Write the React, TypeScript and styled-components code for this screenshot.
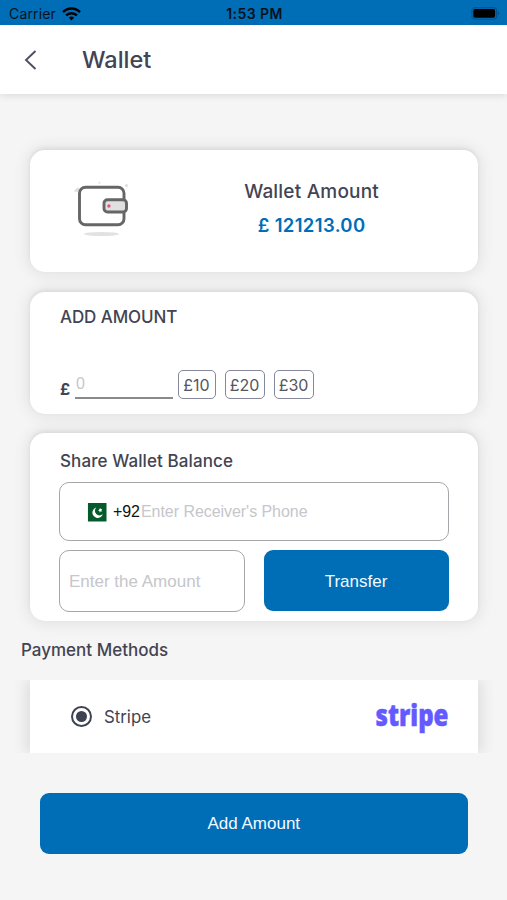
import React from "react";
import styled, { createGlobalStyle } from "styled-components";

const BLUE = "#006db7";
const INK = "#424453";

const GlobalStyle = createGlobalStyle`
  * { box-sizing: border-box; }
  body { margin: 0; background: #f5f5f5; }
  button, input { font: inherit; margin: 0; }
`;

const Screen = styled.div`
  width: 507px;
  height: 900px;
  overflow: hidden;
  background: #f5f5f5;
  color: ${INK};
  font-family: Inter, "Liberation Sans", sans-serif;
  display: flex;
  flex-direction: column;
`;

const StatusBar = styled.div`
  flex: none;
  height: 25px;
  padding: 2px 7px 0 9px;
  background: ${BLUE};
  color: #06121c;
  display: grid;
  grid-template-columns: 1fr auto 1fr;
  align-items: center;
  font-size: 14px;
  line-height: 20px;
`;

const Carrier = styled.div`
  display: flex;
  align-items: center;
  gap: 6px;
  letter-spacing: 0.15px;
`;

const Clock = styled.div`
  font-weight: 600;
  letter-spacing: 0.45px;
`;

const BatterySlot = styled.div`
  display: flex;
  justify-content: flex-end;
`;

const Header = styled.header`
  flex: none;
  height: 69px;
  background: #fff;
  display: flex;
  align-items: center;
  padding-left: 24px;
  box-shadow: 0 2px 7px rgba(0, 0, 0, 0.1);
`;

const BackButton = styled.button`
  width: 58px;
  height: 40px;
  padding: 0;
  border: 0;
  background: none;
  display: flex;
  align-items: center;
`;

const Title = styled.h1`
  margin: 0;
  font-size: 23.5px;
  font-weight: 500;
  line-height: 30px;
`;

const Content = styled.main`
  padding: 56px 29.5px 0 30px;
  display: flex;
  flex-direction: column;
`;

const Card = styled.section<{ $height: number }>`
  height: ${(p) => p.$height}px;
  margin-bottom: 19.5px;
  padding: 0 29px;
  border-radius: 15px;
  background: #fff;
  box-shadow: 0 -2px 4px rgba(0, 0, 0, 0.06), 0 0 16px 2px rgba(0, 0, 0, 0.09);
`;

const BalanceCard = styled(Card)`
  display: flex;
  align-items: flex-start;
  justify-content: space-between;
  padding: 30px 98.5px 0 44px;
`;

const Balance = styled.div`
  text-align: center;
`;

const BalanceLabel = styled.div`
  font-size: 19px;
  line-height: 24px;
  font-weight: 500;
  letter-spacing: 0.2px;
`;

const BalanceValue = styled.div`
  margin-top: 9px;
  font-size: 18.5px;
  line-height: 24px;
  font-weight: 600;
  letter-spacing: 0.35px;
  color: ${BLUE};
`;

const Heading = styled.h2<{ $spacing?: number }>`
  margin: 0;
  font-size: 17px;
  line-height: 22px;
  font-weight: 500;
  letter-spacing: ${(p) => p.$spacing ?? 0}px;
`;

const AmountCard = styled(Card)`
  padding-top: 14px;
  padding-left: 30px;
`;

const AmountRow = styled.div`
  margin-top: 42.5px;
  display: flex;
  height: 29px;
`;

const Pound = styled.span`
  width: 15px;
  padding-top: 8px;
  font-size: 16px;
  line-height: 22px;
  font-weight: 700;
`;

const AmountInput = styled.input`
  width: 98px;
  height: 29px;
  padding: 1px 0 0 1px;
  margin-right: 4.5px;
  border: 0;
  border-bottom: 2px solid #8a8a8a;
  border-radius: 0;
  outline: 0;
  background: none;
  font-family: "Liberation Sans", sans-serif;
  font-size: 16px;
  &::placeholder { color: #c7c7ca; opacity: 1; }
`;

const Chip = styled.button<{ $width: number }>`
  width: ${(p) => p.$width}px;
  height: 29px;
  margin-right: 9px;
  padding: 0;
  border: 1.4px solid #85879a;
  border-radius: 5px;
  background: #fff;
  color: #555660;
  font-size: 16px;
`;

const ShareCard = styled(Card)`
  padding-top: 16.5px;
  margin-bottom: 0;
`;

const ShareTitle = styled(Heading)`
  margin-left: 1px;
`;

const fieldBase = `
  border: 1.3px solid #a5a6aa;
  border-radius: 10px;
  background: #fff;
`;

const PhoneField = styled.div`
  ${fieldBase}
  margin-top: 10.5px;
  height: 59px;
  padding: 1px 0 0 27px;
  display: flex;
  align-items: center;
`;

const DialCode = styled.span`
  margin-left: 6px;
  width: 28px;
  color: #111;
  font-family: "Liberation Sans", sans-serif;
  font-size: 16px;
  letter-spacing: -0.1px;
`;

const PhoneInput = styled.input`
  width: 250px;
  height: 40px;
  padding: 0;
  border: 0;
  outline: 0;
  background: none;
  font-family: "Liberation Sans", sans-serif;
  font-size: 16px;
  letter-spacing: -0.05px;
  &::placeholder { color: #c6c6cb; opacity: 1; }
`;

const TransferRow = styled.div`
  margin-top: 9px;
  display: grid;
  grid-template-columns: 186px 185px;
  justify-content: space-between;
`;

const TransferInput = styled.input`
  ${fieldBase}
  width: 100%;
  height: 62px;
  padding: 2px 9px 0;
  outline: 0;
  font-family: "Liberation Sans", sans-serif;
  font-size: 17px;
  &::placeholder { color: #c6c6cb; opacity: 1; }
`;

const PrimaryButton = styled.button`
  height: 61px;
  padding: 2px 0 0;
  border: 0;
  border-radius: 9px;
  background: ${BLUE};
  color: #f4faff;
  font-family: "Liberation Sans", sans-serif;
  font-size: 17px;
`;

const SubmitButton = styled(PrimaryButton)`
  margin: 39.5px 10px 0;
`;

const MethodsTitle = styled(Heading)`
  margin: 18px 0 0 -9px;
`;

const MethodCard = styled.label`
  height: 73px;
  margin-top: 19px;
  padding: 0 28px 0 41px;
  background: #fff;
  display: flex;
  align-items: center;
  box-shadow: 0 0 16px 2px rgba(0, 0, 0, 0.12);
  clip-path: inset(0 -16px);
`;

const MethodName = styled.span`
  flex: 1;
  margin-left: 12px;
  font-size: 16.8px;
  line-height: 22px;
`;

const Radio = styled.span`
  width: 21px;
  height: 21px;
  border: 2px solid #3e4353;
  border-radius: 50%;
  display: grid;
  place-items: center;
  &::after {
    content: "";
    width: 11px;
    height: 11px;
    border-radius: 50%;
    background: #3e4353;
  }
`;

const WifiIcon = () => (
  <svg width="19" height="14" viewBox="0 0 19 14" fill="none" stroke="#000" strokeWidth="2.5">
    <path d="M1 5.2C5.8.3 13.2.3 18 5.2" />
    <path d="M4.1 8.4c3-3 7.8-3 10.8 0" />
    <path d="M9.5 13.4 6.8 10.6c1.5-1.5 3.9-1.5 5.4 0z" fill="#000" stroke="none" />
  </svg>
);

const BatteryIcon = () => (
  <svg width="29" height="13" viewBox="0 0 29 13">
    <rect x="0.8" y="0.6" width="24.8" height="11.6" rx="3.2" fill="none" stroke="#00528a" strokeWidth="1.1" />
    <rect x="2.3" y="2.1" width="21.8" height="8.6" rx="1.6" fill="#000" />
    <path d="M26.8 4.3v4.2c1.6-.6 1.6-3.6 0-4.2z" fill="#00528a" />
  </svg>
);

const BackIcon = () => (
  <svg width="13" height="20" viewBox="0 0 13 20" fill="none" stroke="#4c4e63" strokeWidth="1.9">
    <path d="M11.5 1 2 10l9.5 9" />
  </svg>
);

const WalletIcon = () => (
  <svg width="56" height="58" viewBox="0 0 56 58">
    <path d="M0 11.5c.6-2 2-1.6 2.8-3.2C4.600 7 6.500 8.500 6.500 12z" fill="#dcdcdc" />
    <circle cx="25.500" cy="2.800" r="1" fill="#dedede" />
    <circle cx="52.500" cy="5.500" r="1.500" fill="#dedede" />
    <rect x="5.500" y="7.200" width="44.500" height="37.500" rx="6" fill="#fff" stroke="#666" strokeWidth="2.900" />
    <rect x="30" y="19.800" width="22.500" height="12.200" rx="3.500" fill="#e0e0e0" stroke="#666" strokeWidth="2.900" />
    <circle cx="34.900" cy="26" r="1.700" fill="#e0557f" />
    <ellipse cx="27.500" cy="54" rx="17.500" ry="2" fill="#e2e2e2" />
  </svg>
);

const FlagIcon = () => (
  <svg width="20" height="19" viewBox="0 0 20 19">
    <rect width="1" height="19" fill="#f4f4f4" />
    <rect x="1" width="18.5" height="18.5" fill="#055a2d" />
    <path d="M9.3 4.5a5.3 5.3 0 1 0 6.5 6.6 4.6 4.6 0 1 1-6.5-6.6z" fill="#fff" />
    <path d="m13 4.7.7 1.3 1.5-.1-.8 1.3.8 1.3-1.5-.2-.9 1.1-.4-1.5-1.3-.6 1.3-.7z" fill="#fff" />
  </svg>
);

const StripeLogo = () => (
  <svg width="76" height="60" viewBox="0 0 76 60" role="img" aria-label="stripe">
    <text
      x="1.5"
      y="38.500"
      textLength="73"
      lengthAdjust="spacingAndGlyphs"
      fontFamily="'Open Sans', 'Noto Sans', sans-serif"
      fontWeight="800"
      fontSize="30"
      fill="#635bff"
      stroke="#635bff"
      strokeWidth="0.5"
    >
      stripe
    </text>
  </svg>
);

const presets = [
  { label: "£10", width: 38 },
  { label: "£20", width: 40 },
  { label: "£30", width: 40 },
];

export default function App() {
  return (
    <>
      <GlobalStyle />
      <Screen>
        <StatusBar>
          <Carrier>
            Carrier
            <WifiIcon />
          </Carrier>
          <Clock>1:53 PM</Clock>
          <BatterySlot>
            <BatteryIcon />
          </BatterySlot>
        </StatusBar>
        <Header>
          <BackButton aria-label="Back">
            <BackIcon />
          </BackButton>
          <Title>Wallet</Title>
        </Header>
        <Content>
          <BalanceCard $height={122}>
            <WalletIcon />
            <Balance>
              <BalanceLabel>Wallet Amount</BalanceLabel>
              <BalanceValue>£ 121213.00</BalanceValue>
            </Balance>
          </BalanceCard>
          <AmountCard $height={122}>
            <Heading $spacing={-0.1}>ADD AMOUNT</Heading>
            <AmountRow>
              <Pound>£</Pound>
              <AmountInput placeholder="0" />
              {presets.map((p) => (
                <Chip key={p.label} $width={p.width}>
                  {p.label}
                </Chip>
              ))}
            </AmountRow>
          </AmountCard>
          <ShareCard $height={188}>
            <ShareTitle $spacing={0.1}>Share Wallet Balance</ShareTitle>
            <PhoneField>
              <FlagIcon />
              <DialCode>+92</DialCode>
              <PhoneInput placeholder="Enter Receiver's Phone" />
            </PhoneField>
            <TransferRow>
              <TransferInput placeholder="Enter the Amount" />
              <PrimaryButton>Transfer</PrimaryButton>
            </TransferRow>
          </ShareCard>
          <MethodsTitle>Payment Methods</MethodsTitle>
          <MethodCard>
            <Radio />
            <MethodName>Stripe</MethodName>
            <StripeLogo />
          </MethodCard>
          <SubmitButton>Add Amount</SubmitButton>
        </Content>
      </Screen>
    </>
  );
}
